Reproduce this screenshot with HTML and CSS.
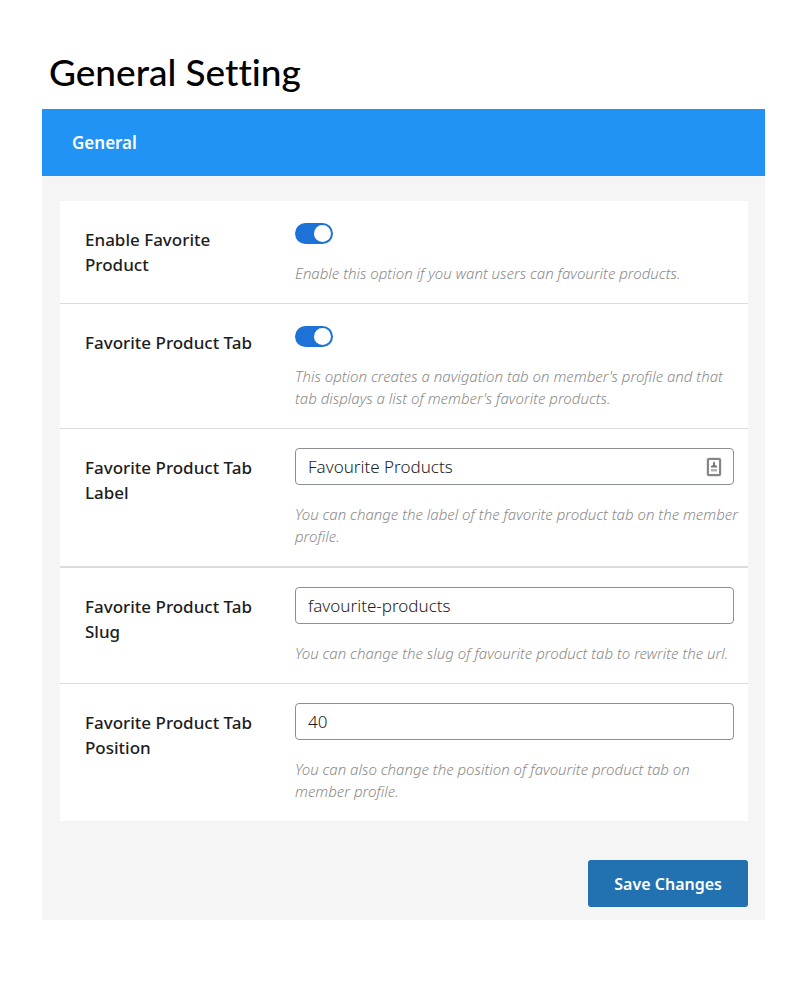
FILE: index.html
```html
<!DOCTYPE html>
<html lang="en">
<head>
  <meta charset="UTF-8">
  <meta name="viewport" content="width=device-width, initial-scale=1">
  <title>General Setting</title>
  <link rel="stylesheet" href="styles.css">
</head>
<body>

<div class="container">
  <h1>General Setting</h1>

  <form class="settings">
    <h2 class="settings_header">General</h2>

    <div class="settings_body">
      <div class="card">
        <div class="row">
          <label class="title" for="enable_favorite">Enable Favorite Product</label>
          <div class="field">
            <input type="checkbox" class="toggle" id="enable_favorite" checked>
            <p class="description">Enable this option if you want users can favourite products.</p>
          </div>
        </div>

        <div class="row">
          <label class="title" for="favorite_tab">Favorite Product Tab</label>
          <div class="field">
            <input type="checkbox" class="toggle" id="favorite_tab" checked>
            <p class="description">This option creates a navigation tab on member's profile and that tab displays a list of member's favorite products.</p>
          </div>
        </div>

        <div class="row row_thick">
          <label class="title" for="tab_label">Favorite Product Tab Label</label>
          <div class="field">
            <div class="input_wrap">
              <input type="text" id="tab_label" value="Favourite Products">
              <svg class="fill_icon" width="16" height="20" viewBox="0 0 16 20" aria-hidden="true">
                <rect x="0.5" y="0.5" width="15" height="19" rx="2" fill="#d2d2d2"/>
                <rect x="2" y="2" width="12" height="16" rx="1" fill="#fff" stroke="#858585" stroke-width="2"/>
                <path d="M8 4l1 2v2l2 1v1.500H5V9l2-1V6z" fill="#777"/>
                <path d="M5 12h6v2.500H5z" fill="#b5b5b5"/>
              </svg>
            </div>
            <p class="description">You can change the label of the favorite product tab on the member profile.</p>
          </div>
        </div>

        <div class="row">
          <label class="title" for="tab_slug">Favorite Product Tab Slug</label>
          <div class="field">
            <input type="text" id="tab_slug" value="favourite-products">
            <p class="description">You can change the slug of favourite product tab to rewrite the url.</p>
          </div>
        </div>

        <div class="row">
          <label class="title" for="tab_position">Favorite Product Tab Position</label>
          <div class="field">
            <input type="text" id="tab_position" value="40">
            <p class="description">You can also change the position of favourite product tab on member profile.</p>
          </div>
        </div>
      </div>

      <button type="submit">Save Changes</button>
    </div>
  </form>
</div>

</body>
</html>
```

FILE: styles.css
```css
* {
  box-sizing: border-box;
}

body {
  margin: 0;
  background: #fff;
  color: #1d1d1d;
  font-family: "Noto Sans", "Open Sans", sans-serif;
}

.container {
  padding: 47px 35px 80px 42px;
}

h1 {
  margin: 0 0 13px 7px;
  font-family: Lato, sans-serif;
  font-size: 37px;
  line-height: 49px;
  font-weight: 500;
  font-variant-ligatures: none;
  color: #000;
}

.settings {
  background: #f5f5f5;
}

.settings_header {
  margin: 0;
  padding: 20px 30px;
  background: #2093f5;
  color: #fff;
  font-size: 17px;
  line-height: 27px;
  font-weight: 600;
}

.settings_body {
  display: flex;
  flex-direction: column;
  padding: 25px 17px 13px 18px;
}

.card {
  background: #fff;
}

.row {
  display: grid;
  grid-template-columns: 170px 1fr;
  column-gap: 40px;
  padding: 19px 14px 19px 25px;
  border-bottom: 1px solid #dcdcde;
}

.row_thick {
  border-bottom-width: 2px;
}

.row:last-child {
  border-bottom: none;
}

.title {
  padding-top: 7px;
  font-size: 17px;
  line-height: 25px;
  font-weight: 500;
}

.description {
  margin: 18px -8px 0 0;
  color: #8a8a8a;
  font-size: 15px;
  line-height: 22px;
  font-style: italic;
  font-weight: 300;
}

input[type=text] {
  display: block;
  width: 100%;
  height: 37px;
  padding: 0 12px;
  border: 1px solid #8c8f94;
  border-radius: 4px;
  background: #fff;
  color: #1d1d1d;
  font-family: inherit;
  font-size: 17px;
  font-weight: 300;
}

.input_wrap {
  position: relative;
}

.fill_icon {
  position: absolute;
  top: 9px;
  right: 12px;
}

.toggle {
  appearance: none;
  display: flex;
  align-items: center;
  justify-content: flex-end;
  width: 38px;
  height: 21px;
  margin: 3px 0 0;
  padding: 0 2px;
  border-radius: 11px;
  background: #1d72d8;
  cursor: pointer;
}

.toggle::before {
  content: "";
  width: 17px;
  height: 17px;
  border-radius: 50%;
  background: #fff;
}

.toggle:not(:checked) {
  justify-content: flex-start;
  background: #b3b3b3;
}

button {
  align-self: flex-end;
  margin-top: 39px;
  padding: 11px 26px 9px;
  border: none;
  border-radius: 3px;
  background: #2271b1;
  color: #fff;
  font-family: inherit;
  font-size: 16px;
  line-height: 27px;
  font-weight: 600;
  cursor: pointer;
}
```
